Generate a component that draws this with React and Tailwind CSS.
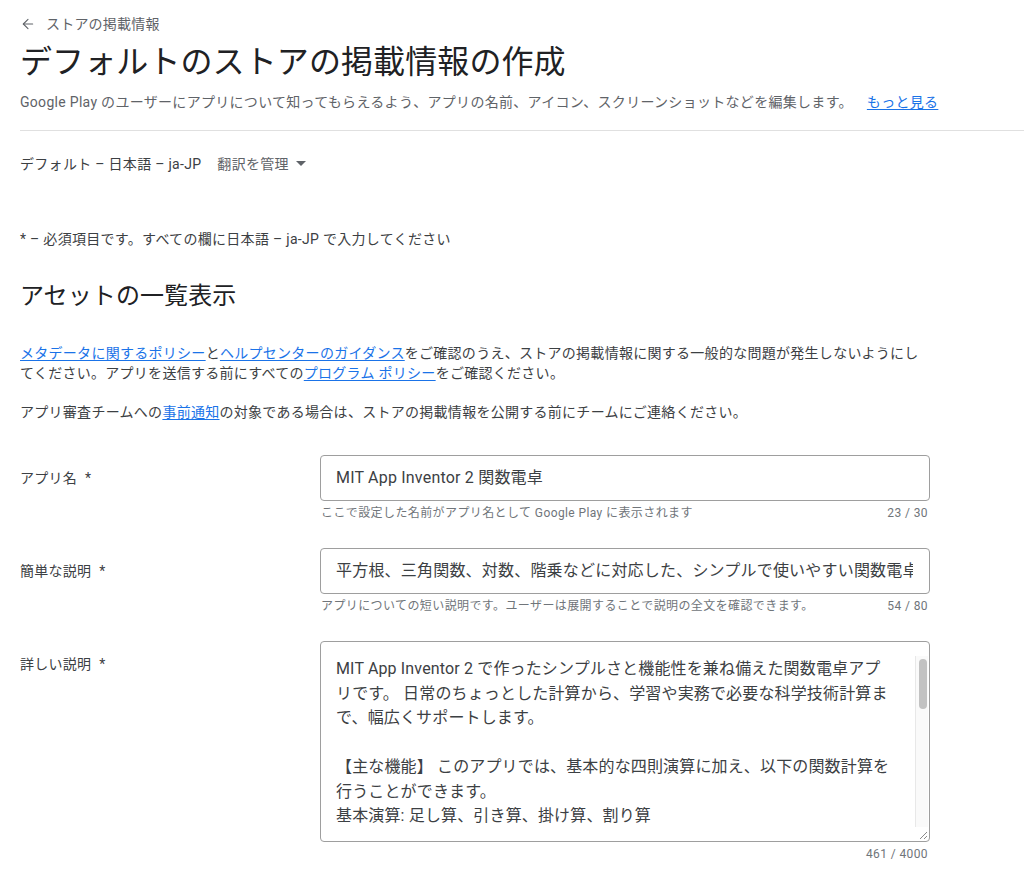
import React from "react";
import { ArrowLeft } from "lucide-react";

const FONT = "font-['Roboto','Noto_Sans_CJK_JP',sans-serif]";

function Link({ children }) {
  return <a className="text-[#1a73e8] underline underline-offset-2">{children}</a>;
}

function FieldRow({ label, children, helper, counter, className = "" }) {
  return (
    <div className={`flex ${className}`}>
      <div className="w-[300px] shrink-0 pt-[13px] text-[14px] leading-[20px] tracking-[0.25px] text-[#3c4043]">
        {label}
        <span className="ml-[8px]">*</span>
      </div>
      <div className="w-[610px] shrink-0">
        {children}
        <div className="mt-[4px] flex justify-between px-[1px] text-[12px] leading-[16px] tracking-[0.4px] text-[#70757a]">
          <span>{helper}</span>
          <span className="pr-[1px]">{counter}</span>
        </div>
      </div>
    </div>
  );
}

function TextInput({ value }) {
  return (
    <div className="h-[46px] rounded-[4px] border border-[#9e9e9e] pl-[15px] pr-[16px]">
      <div className="overflow-hidden whitespace-nowrap text-[16px] leading-[44px] tracking-[0.2px] text-[#3c4043]">
        {value}
      </div>
    </div>
  );
}

const longLines = [
  "MIT App Inventor 2 で作ったシンプルさと機能性を兼ね備えた関数電卓アプ",
  "リです。 日常のちょっとした計算から、学習や実務で必要な科学技術計算ま",
  "で、幅広くサポートします。",
  "",
  "【主な機能】 このアプリでは、基本的な四則演算に加え、以下の関数計算を",
  "行うことができます。",
  "基本演算: 足し算、引き算、掛け算、割り算",
];

function TextArea() {
  return (
    <div className="relative h-[201px] rounded-[4px] border border-[#9e9e9e] overflow-hidden">
      <div className="pl-[15px] pt-[15px] text-[16px] leading-[24.5px] tracking-[0.15px] text-[#3c4043]">
        {longLines.map((l, i) => (
          <div key={i} className="h-[24.5px] whitespace-nowrap">
            {l}
          </div>
        ))}
      </div>
      {/* scrollbar */}
      <div className="absolute right-[1px] top-[14px] h-[171px] w-[13px] border-l border-[#e8e8e8] bg-[#fafafa]">
        <div className="ml-[3px] mt-[3px] h-[50px] w-[8px] rounded-full bg-[#c2c2c2]" />
      </div>
      {/* resize handle */}
      <svg className="absolute bottom-[1px] right-[1px]" width="10" height="10" viewBox="0 0 10 10">
        <line x1="9" y1="2" x2="2" y2="9" stroke="#8a8a8a" strokeWidth="1" />
        <line x1="9" y1="6" x2="6" y2="9" stroke="#8a8a8a" strokeWidth="1" />
      </svg>
    </div>
  );
}

export default function App() {
  return (
    <div className={`${FONT} min-h-[880px] w-[1024px] bg-white text-[#202124]`}>
      <div className="pl-5">
        {/* breadcrumb */}
        <div className="mt-[14px] flex h-[20px] items-center text-[14px] tracking-[0.2px] text-[#5f6368]">
          <ArrowLeft size={16} strokeWidth={1.6} className="mr-[10px] text-[#5f6368]" />
          <span>ストアの掲載情報</span>
        </div>
        <h1 className="mt-[8px] text-[32px] font-normal leading-[40px] tracking-[0.1px] text-[#202124]">
          デフォルトのストアの掲載情報の作成
        </h1>
        <p className="mt-[10px] text-[14px] leading-[20px] tracking-[0.3px] text-[#5f6368]">
          Google Play のユーザーにアプリについて知ってもらえるよう、アプリの名前、アイコン、スクリーンショットなどを編集します。
          <span className="ml-[14px]">
            <Link>もっと見る</Link>
          </span>
        </p>
        <div className="mt-[18px] h-px bg-[#e0e0e0]" />

        <div className="mt-[23px] flex h-[20px] items-center text-[14px] tracking-[0.3px]">
          <span className="text-[#3c4043]">デフォルト – 日本語 – ja-JP</span>
          <span className="ml-[16px] text-[#5f6368]">翻訳を管理</span>
          <svg className="ml-[7px]" width="10" height="6" viewBox="0 0 10 6">
            <path d="M0 0 L10 0 L5 5 Z" fill="#5f6368" />
          </svg>
        </div>

        <p className="mt-[55px] text-[14px] leading-[20px] tracking-[0.3px] text-[#3c4043]">
          * – 必須項目です。すべての欄に日本語 – ja-JP で入力してください
        </p>

        <h2 className="mt-[31px] text-[24px] font-normal leading-[32px] tracking-[0.1px] text-[#202124]">
          アセットの一覧表示
        </h2>

        <p className="mt-[31px] w-[960px] text-[14px] leading-[20px] tracking-[0.28px] text-[#3c4043]">
          <Link>メタデータに関するポリシー</Link>と<Link>ヘルプセンターのガイダンス</Link>
          をご確認のうえ、ストアの掲載情報に関する一般的な問題が発生しないようにし
          <br />
          てください。アプリを送信する前にすべての<Link>プログラム ポリシー</Link>をご確認ください。
        </p>

        <p className="mt-[19px] text-[14px] leading-[20px] tracking-[0.28px] text-[#3c4043]">
          アプリ審査チームへの<Link>事前通知</Link>
          の対象である場合は、ストアの掲載情報を公開する前にチームにご連絡ください。
        </p>

        <FieldRow
          className="mt-[33px]"
          label="アプリ名"
          helper="ここで設定した名前がアプリ名として Google Play に表示されます"
          counter="23 / 30"
        >
          <TextInput value="MIT App Inventor 2 関数電卓" />
        </FieldRow>

        <FieldRow
          className="mt-[27px]"
          label="簡単な説明"
          helper="アプリについての短い説明です。ユーザーは展開することで説明の全文を確認できます。"
          counter="54 / 80"
        >
          <TextInput value="平方根、三角関数、対数、階乗などに対応した、シンプルで使いやすい関数電卓" />
        </FieldRow>

        <FieldRow className="mt-[27px]" label="詳しい説明" helper="" counter="461 / 4000">
          <TextArea />
        </FieldRow>
      </div>
    </div>
  );
}
